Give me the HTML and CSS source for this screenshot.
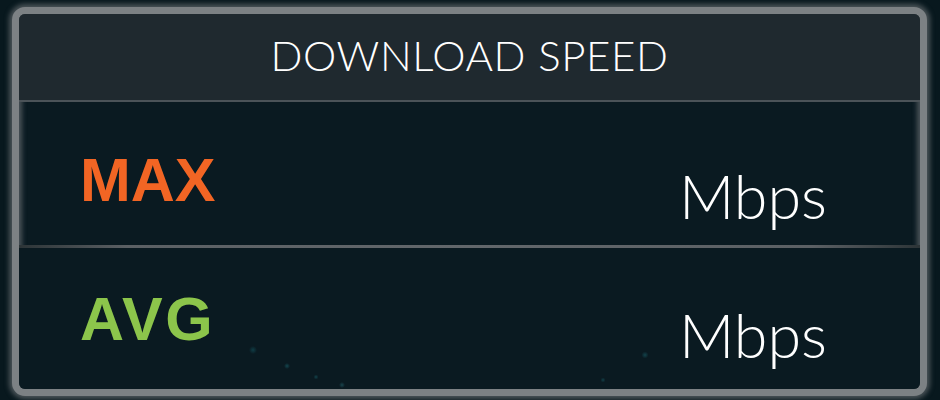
FILE: index.html
```html
<!DOCTYPE html>
<html>
<head>
<meta charset="utf-8">
<link rel="stylesheet" href="styles.css">
</head>
<body>
<div class="frame">
  <div class="header"><span class="title">DOWNLOAD SPEED</span></div>
  <div class="row row-max">
    <span class="label max">MAX</span>
    <span class="unit">Mbps</span>
  </div>
  <div class="divider"></div>
  <div class="row row-avg">
    <span class="label avg">AVG</span>
    <span class="unit">Mbps</span>
  </div>
</div>
</body>
</html>
```
FILE: styles.css
```css
html, body {
  margin: 0;
  padding: 0;
  background: #08181e;
  width: 940px;
  height: 400px;
  overflow: hidden;
}
.frame {
  box-sizing: border-box;
  margin: 7px 0 0 12px;
  width: 915px;
  height: 389px;
  border: 7px solid #7c8184;
  border-radius: 13px;
  background: #0a1a21;
  box-shadow: 0 0 5px 3px rgba(98,104,108,0.75), inset 0 0 5px 3px rgba(98,104,108,0.75);
  overflow: hidden;
  display: flex;
  flex-direction: column;
}
.header {
  height: 82px;
  background: #1f292f;
  border-bottom: 2px solid #4b5358;
  display: flex;
  align-items: center;
  justify-content: center;
  padding-bottom: 4px;
  box-sizing: content-box;
}
.title {
  font-family: "Lato", sans-serif;
  font-weight: 300;
  font-size: 42px;
  line-height: 1;
  color: #ffffff;
  letter-spacing: 0.6px;
}
.row {
  display: flex;
  align-items: flex-start;
  justify-content: space-between;
  padding: 0 93px 0 61px;
}
.row-max {
  height: 143px;
  padding-top: 48px;
  box-sizing: border-box;
}
.row-avg {
  flex: 1;
  padding-top: 41px;
  box-sizing: border-box;
  background:
    radial-gradient(circle at 234px 102px, rgba(20,90,100,0.55), rgba(20,90,100,0) 4px),
    radial-gradient(circle at 268px 118px, rgba(25,100,110,0.6), rgba(25,100,110,0) 3px),
    radial-gradient(circle at 297px 129px, rgba(25,100,110,0.55), rgba(25,100,110,0) 2.5px),
    radial-gradient(circle at 323px 137px, rgba(40,110,120,0.5), rgba(40,110,120,0) 3px),
    radial-gradient(circle at 584px 132px, rgba(25,100,110,0.5), rgba(25,100,110,0) 2.5px),
    radial-gradient(circle at 626px 107px, rgba(25,100,110,0.55), rgba(25,100,110,0) 3.5px),
    #0a1a21;
}
.label {
  font-family: "Liberation Sans", Arial, sans-serif;
  font-weight: 700;
  font-size: 61px;
  line-height: 1;
}
.max { color: #f26524; }
.avg { color: #8cc54b; letter-spacing: 2.5px; }
.unit {
  font-family: "Lato", sans-serif;
  font-weight: 300;
  font-size: 61px;
  line-height: 1;
  color: #ffffff;
  margin-top: 15px;
}
.divider {
  height: 3px;
  background: linear-gradient(to right, #2c3437 0%, #5b6064 12%, #62676b 50%, #5b6064 88%, #2c3437 100%);
}
```
